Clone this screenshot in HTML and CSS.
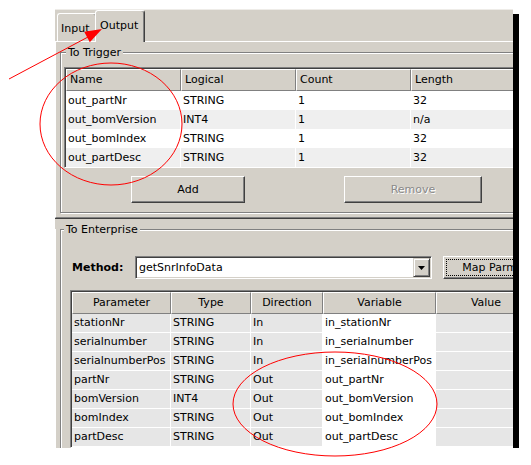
FILE: index.html
```html
<!DOCTYPE html>
<html lang="en">

<head>
    <meta charset="UTF-8">
    <title>Output mapping</title>
    <link rel="stylesheet" href="styles.css">
</head>

<body>
    <div class="frame">
        <div class="pane">
            <div class="tabs">
                <div class="tab input">Input</div>
                <div class="tab active">Output</div>
            </div>
            <div class="panel">
                <div class="group trigger">
                    <div class="group-title">To Trigger</div>
                    <div class="scroll">
                        <table class="grid">
                            <thead>
                                <tr>
                                    <th class="c-name">Name</th>
                                    <th class="c-logical">Logical</th>
                                    <th class="c-count">Count</th>
                                    <th class="c-length">Length</th>
                                </tr>
                            </thead>
                            <tbody>
                                <tr><td>out_partNr</td><td>STRING</td><td>1</td><td>32</td></tr>
                                <tr><td>out_bomVersion</td><td>INT4</td><td>1</td><td>n/a</td></tr>
                                <tr><td>out_bomIndex</td><td>STRING</td><td>1</td><td>32</td></tr>
                                <tr><td>out_partDesc</td><td>STRING</td><td>1</td><td>32</td></tr>
                            </tbody>
                        </table>
                    </div>
                    <div class="actions">
                        <button class="add">Add</button>
                        <button class="remove" disabled>Remove</button>
                    </div>
                </div>
            </div>
        </div>
        <div class="divider"></div>
        <div class="pane bottom">
            <div class="group enterprise">
                <div class="group-title">To Enterprise</div>
                <div class="method">
                    <label>Method:</label>
                    <div class="combo">
                        <span class="combo-text">getSnrInfoData</span>
                        <span class="combo-btn">
                            <svg width="7" height="4" viewBox="0 0 7 4"><path d="M0 0h7L3.5 4z" fill="#000"/></svg>
                        </span>
                    </div>
                    <button class="map">Map Parms</button>
                </div>
                <div class="scroll">
                    <table class="params">
                        <thead>
                            <tr>
                                <th class="c-param">Parameter</th>
                                <th class="c-type">Type</th>
                                <th class="c-dir">Direction</th>
                                <th class="c-var">Variable</th>
                                <th class="c-val">Value</th>
                            </tr>
                        </thead>
                        <tbody>
                            <tr><td>stationNr</td><td>STRING</td><td>In</td><td class="var">in_stationNr</td><td></td></tr>
                            <tr><td>serialnumber</td><td>STRING</td><td>In</td><td class="var">in_serialnumber</td><td></td></tr>
                            <tr><td>serialnumberPos</td><td>STRING</td><td>In</td><td class="var">in_serialnumberPos</td><td></td></tr>
                            <tr><td>partNr</td><td>STRING</td><td>Out</td><td class="var">out_partNr</td><td></td></tr>
                            <tr><td>bomVersion</td><td>INT4</td><td>Out</td><td class="var">out_bomVersion</td><td></td></tr>
                            <tr><td>bomIndex</td><td>STRING</td><td>Out</td><td class="var">out_bomIndex</td><td></td></tr>
                            <tr><td>partDesc</td><td>STRING</td><td>Out</td><td class="var">out_partDesc</td><td></td></tr>
                        </tbody>
                    </table>
                </div>
            </div>
        </div>
    </div>

    <!-- red markup drawn over the screenshot -->
    <svg class="notes" width="531" height="465" viewBox="0 0 531 465">
        <line x1="9" y1="79" x2="88" y2="37" stroke="#f00" stroke-width="1"/>
        <polygon points="102,29 89.8,42.3 84.2,31.7" fill="#f00"/>
        <ellipse cx="111" cy="124" rx="71" ry="61" fill="none" stroke="#f00" stroke-width="1"/>
        <ellipse cx="335" cy="404" rx="102" ry="52" fill="none" stroke="#f00" stroke-width="1"/>
    </svg>
</body>

</html>
```

FILE: styles.css
```css
* {
    box-sizing: border-box;
}

body {
    margin: 0;
    background: #fff;
    font-family: "DejaVu Sans", sans-serif;
    font-size: 11px;
    color: #000;
}

.frame {
    margin: 9px 0 0 55px;
    width: 458px;
    height: 439px;
    overflow: hidden;
    background: #d4d0c8;
    border-top: 1px solid #eeece8;
    box-shadow: 6px 5px 0 #000;
}

.pane {
    width: 500px;
}

/* tabs */
.tabs {
    display: flex;
    align-items: flex-end;
    height: 31px;
    padding-left: 2px;
}

.tab {
    height: 28px;
    padding: 8px 0 0 3px;
    line-height: 13px;
    border: 1px solid #fff;
    border-bottom: none;
    border-right-color: #404040;
    border-radius: 3px 3px 0 0;
    box-shadow: inset -1px 0 #808080;
    background: #d4d0c8;
}

.tab.input {
    width: 40px;
}

.tab.active {
    position: relative;
    width: 50px;
    height: 32px;
    margin: 0 0 -1px -2px;
    padding-left: 4px;
}

.panel {
    border-top: 1px solid #fff;
    border-left: 1px solid #fff;
    border-bottom: 1px solid #808080;
    padding: 0 0 4px 4px;
}

.divider {
    width: 500px;
    height: 1px;
    background: #404040;
}

.bottom {
    height: 300px;
    border-left: 1px solid #fff;
    padding-left: 4px;
}

/* group boxes */
.group {
    border: 1px solid #808080;
    box-shadow: inset 1px 1px #fff, 1px 1px #fff;
}

.group-title {
    width: max-content;
    margin: -7px 0 0 2px;
    padding: 0 2px;
    line-height: 13px;
    background: #d4d0c8;
}

.trigger {
    margin-top: 10px;
    padding: 0 0 9px 3px;
}

.enterprise {
    margin-top: 10px;
    padding-left: 9px;
    height: 260px;
}

.enterprise .group-title {
    margin-left: -6px;
}

/* tables */
.scroll {
    border-top: 1px solid #808080;
    border-left: 1px solid #808080;
    border-bottom: 1px solid #fff;
    margin-top: 8px;
}

.enterprise .scroll {
    margin-top: 11px;
}

table {
    border-collapse: separate;
    border-spacing: 0;
    table-layout: fixed;
    border-top: 1px solid #404040;
    border-left: 1px solid #404040;
}

th {
    height: 22px;
    padding: 0 3px;
    font-weight: normal;
    text-align: left;
    line-height: 20px;
    background: #d4d0c8;
    border-top: 1px solid #fff;
    border-left: 1px solid #fff;
    border-right: 1px solid #808080;
    border-bottom: 1px solid #808080;
    white-space: nowrap;
}

td {
    height: 19px;
    padding: 0 2px;
    line-height: 18px;
    white-space: nowrap;
    overflow: hidden;
    border-right: 1px solid #fff;
}

.grid {
    width: 481px;
}

.c-name,
.c-logical,
.c-count {
    width: 115px;
}

.c-length {
    width: 135px;
}

.grid td {
    background: #fff;
    line-height: 19px;
}

.grid tr:nth-child(even) td {
    background: #efefef;
}

.params {
    width: 465px;
}

.params th {
    text-align: center;
}

.params td {
    background: #e6e6e6;
    border-bottom: 1px solid #fff;
}

.params td.var {
    background: #fff;
}

.c-param { width: 99px; }
.c-type { width: 80px; }
.c-dir { width: 72px; }
.c-var { width: 113px; }
.c-val { width: 100px; }

/* buttons */
button {
    font: inherit;
    color: #000;
    padding: 0;
    background: #d4d0c8;
    border: 1px solid;
    border-color: #fff #404040 #404040 #fff;
    box-shadow: inset -1px -1px #808080;
}

button:disabled {
    color: #8a8a8a;
    text-shadow: 1px 1px #fff;
}

.actions {
    display: flex;
    gap: 99px;
    margin: 8px 0 0 67px;
}

.add {
    width: 114px;
    height: 27px;
}

.remove {
    width: 138px;
    height: 27px;
}

/* method row */
.method {
    display: flex;
    align-items: center;
    margin-top: 20px;
}

.method label {
    width: 65px;
    padding-left: 2px;
    font-weight: bold;
}

.combo {
    display: flex;
    width: 297px;
    height: 23px;
    padding: 1px;
    background: #fff;
    border: 1px solid;
    border-color: #808080 #fff #fff #808080;
    box-shadow: inset 1px 1px #404040, inset -1px -1px #d4d0c8;
}

.combo-text {
    flex: 1;
    padding-left: 2px;
    line-height: 19px;
}

.combo-btn {
    display: flex;
    align-items: center;
    justify-content: center;
    width: 17px;
    background: #d4d0c8;
    border: 1px solid;
    border-color: #d4d0c8 #404040 #404040 #d4d0c8;
    box-shadow: inset 1px 1px #fff, inset -1px -1px #808080;
}

.map {
    flex: none;
    width: 99px;
    height: 23px;
    margin-left: 11px;
    outline: 1px dotted #000;
    outline-offset: -4px;
}

.notes {
    position: absolute;
    top: 0;
    left: 0;
    pointer-events: none;
}
```
